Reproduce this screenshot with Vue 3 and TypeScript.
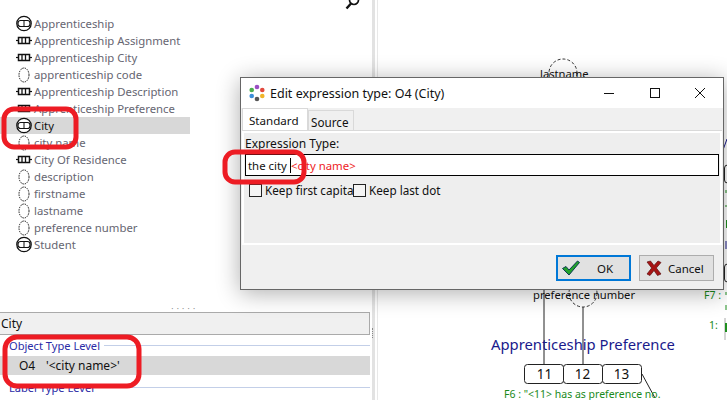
<script setup lang="ts">
interface Row { name: string; kind: 'entity' | 'fact' | 'value'; selected?: boolean }
const rows: Row[] = [
  { name: 'Apprenticeship', kind: 'entity' },
  { name: 'Apprenticeship Assignment', kind: 'fact' },
  { name: 'Apprenticeship City', kind: 'fact' },
  { name: 'apprenticeship code', kind: 'value' },
  { name: 'Apprenticeship Description', kind: 'fact' },
  { name: 'Apprenticeship Preference', kind: 'fact' },
  { name: 'City', kind: 'entity', selected: true },
  { name: 'city name', kind: 'value' },
  { name: 'City Of Residence', kind: 'fact' },
  { name: 'description', kind: 'value' },
  { name: 'firstname', kind: 'value' },
  { name: 'lastname', kind: 'value' },
  { name: 'preference number', kind: 'value' },
  { name: 'Student', kind: 'entity' },
]
</script>

<template>
  <div class="app">
    <div class="left">
      <div class="filter">
        <span class="filter-label">Filter Text</span>
        <svg class="search" width="16" height="10" viewBox="0 0 16 10">
          <circle cx="10" cy="0" r="4.5" fill="none" stroke="#111" stroke-width="1.7" />
          <path d="M7 3.5 L2.5 8.5" stroke="#111" stroke-width="2.4" />
        </svg>
      </div>
      <ul class="tree">
        <li v-for="r in rows" :key="r.name" class="row" :class="{ selected: r.selected }">
          <svg class="ico" width="18" height="17" viewBox="0 0 18 17">
            <template v-if="r.kind === 'entity'">
              <circle cx="8" cy="8.5" r="7.2" fill="#fff" stroke="#111" stroke-width="1.3" />
              <rect x="2" y="5.5" width="12" height="6" rx="2.5" fill="#fff" stroke="#111" stroke-width="1.2" />
              <path d="M8 5.5 V11.5" stroke="#111" stroke-width="1" />
            </template>
            <template v-else-if="r.kind === 'fact'">
              <path d="M0 8.5 H16" stroke="#111" stroke-width="1.2" />
              <rect x="2.5" y="5.5" width="11" height="6" fill="#fff" stroke="#111" stroke-width="1.5" />
              <path d="M6 6 V11 M9.5 6 V11" stroke="#111" stroke-width="1.3" />
            </template>
            <ellipse v-else cx="8" cy="9" rx="5" ry="7" fill="#fff" stroke="#111" stroke-width="1" stroke-dasharray="1.4 1" />
          </svg>
          <span class="row-name">{{ r.name }}</span>
        </li>
      </ul>
      <div class="grip">· · · · ·</div>
      <div class="head">City</div>
      <div class="level"><span>Object Type Level</span><i></i></div>
      <div class="reading"><span class="rid">O4</span><span>'&lt;city name&gt;'</span></div>
      <div class="level second"><span>Label Type Level</span><i></i></div>
    </div>
    <div class="splitter"><i class="vgrip"></i></div>
    <div class="canvas"></div>

    <svg class="diagram" width="727" height="400" viewBox="0 0 727 400">
      <circle cx="563" cy="73" r="14" fill="none" stroke="#333" stroke-dasharray="3 2" />
      <circle cx="583" cy="293" r="14" fill="none" stroke="#333" stroke-dasharray="3 2" />
      <path d="M544 290 V365 M583 307 V365 M642 374 L655 398" stroke="#222" fill="none" />
      <rect x="524.5" y="364.5" width="39" height="19" rx="3" fill="#fff" stroke="#222" />
      <rect x="563.5" y="364.5" width="39" height="19" rx="3" fill="#fff" stroke="#222" />
      <rect x="602.5" y="364.5" width="39" height="19" rx="3" fill="#fff" stroke="#222" />
      <path d="M723 150 L727 139" stroke="#1a1a8c" />
      <rect x="724.5" y="165" width="8" height="18" rx="3" fill="#fff" stroke="#222" />
      <rect x="724.5" y="264" width="8" height="18" rx="3" fill="#fff" stroke="#222" />
      <path d="M725 318 V340" stroke="#aaa" />
      <path d="M726 190 V193 M726 205 V207 M726.5 220 V228 M726 292 V295 M726 305 V310" stroke="#1f8f1f" />
      <path d="M726 323 V332" stroke="#1f8f1f" stroke-width="2" />
      <path d="M726 241 V249" stroke="#1a1a8c" />
    </svg>
    <span class="d-text lastname">lastname</span>
    <span class="d-text prefnum">preference number</span>
    <span class="d-title">Apprenticeship Preference</span>
    <span class="d-num n11">11</span>
    <span class="d-num n12">12</span>
    <span class="d-num n13">13</span>
    <span class="d-green f6">F6 : "&lt;11&gt; has as preference no.</span>
    <span class="d-green f7">F7 :</span>
    <span class="d-green one">1:</span>

    <section class="dialog">
      <header class="titlebar">
        <svg class="logo" width="18" height="18" viewBox="0 0 18 18">
          <circle cx="9" cy="3" r="2.3" fill="#9a4fc4" />
          <circle cx="14.3" cy="6" r="2.3" fill="#e2483d" />
          <circle cx="14.3" cy="12" r="2.3" fill="#f0b429" />
          <circle cx="9" cy="15" r="2.3" fill="#555" />
          <circle cx="3.7" cy="12" r="2.3" fill="#3c8fd8" />
          <circle cx="3.7" cy="6" r="2.3" fill="#4cae4f" />
        </svg>
        <span class="title">Edit expression type: O4 (City)</span>
        <div class="winbtns">
          <svg width="12" height="12" viewBox="0 0 12 12"><path d="M1 6.5 H11" stroke="#111" /></svg>
          <svg width="12" height="12" viewBox="0 0 12 12"><rect x="1.5" y="1.5" width="9" height="9" fill="none" stroke="#111" /></svg>
          <svg width="12" height="12" viewBox="0 0 12 12"><path d="M1 1 L11 11 M11 1 L1 11" stroke="#111" /></svg>
        </div>
      </header>
      <div class="tabs">
        <div class="tab active">Standard</div>
        <div class="tab">Source</div>
      </div>
      <div class="panel">
        <label class="expr-label">Expression Type:</label>
        <div class="input"><span class="typed">the city</span><span class="caret"></span><span class="red">&lt;city name&gt;</span></div>
        <div class="checks">
          <span class="box"></span><span class="check-first">Keep first capita</span>
          <span class="box"></span><span>Keep last dot</span>
        </div>
      </div>
      <div class="buttons">
        <button class="btn primary">
          <svg width="20" height="18" viewBox="0 0 20 18"><path d="M1.5 9.5 L5 7.5 L8 11 L16.5 2 L18.5 3.5 L8 16 Z" fill="#22a22a" stroke="#0d3b52" stroke-width="1" /></svg>
          <span>OK</span>
        </button>
        <button class="btn">
          <svg width="16" height="16" viewBox="0 0 16 16"><path d="M1 2 L4.5 1 L8 5.5 L12 1 L15 2.5 L10.3 8 L15 14 L11.5 15.5 L8 10.5 L4 15.5 L1 14 L5.7 8 Z" fill="#a81414" stroke="#5a1010" stroke-width=".7" /></svg>
          <span>Cancel</span>
        </button>
      </div>
    </section>

    <svg class="marks" width="727" height="400" viewBox="0 0 727 400">
      <rect x="4" y="109" width="72" height="38" rx="10" />
      <rect x="225" y="152" width="79" height="30" rx="10" />
      <rect x="5" y="337" width="134" height="49" rx="12" />
    </svg>
  </div>
</template>

<style>
html, body { margin: 0; background: #fff; }
</style>

<style scoped>
.app {
  position: relative;
  width: 727px;
  height: 400px;
  overflow: hidden;
  display: flex;
  background: #fff;
  font-family: "Noto Sans", "Open Sans", sans-serif;
  font-size: 12px;
  color: #111;
}
.left { width: 372px; height: 400px; display: flex; flex-direction: column; flex: none; }
.filter { height: 15px; display: flex; justify-content: space-between; overflow: hidden; padding: 0 12px 0 9px; }
.filter-label { margin-top: -14px; line-height: 17px; color: #555; font-size: 11.4px; }
.tree { list-style: none; margin: 0; padding: 0; flex: 1; }
.row { height: 17px; width: 190px; display: flex; align-items: center; padding-left: 16px; box-sizing: border-box; color: #666672; line-height: 17px; font-size: 11.35px; }
.row.selected { background: #d8d8d8; color: #111; }
.ico { flex: none; }
.row-name { white-space: nowrap; }
.grip { height: 12px; padding-top: 6px; box-sizing: border-box; line-height: 6px; text-align: center; font-size: 8px; color: #888; width: 367px; letter-spacing: .6px; }
.head { height: 23px; width: 370px; box-sizing: border-box; background: #f0f0f0; border: 1px solid #aaa; border-left: none; line-height: 21px; padding-left: 1px; }
.level { display: flex; align-items: center; gap: 4px; height: 21px; width: 370px; color: #2b2ba6; padding-left: 9px; box-sizing: border-box; font-size: 11.1px; }
.level i { flex: 1; height: 1px; background: #c3cfe8; }
.reading { height: 19px; width: 370px; background: #d8d8d8; display: flex; align-items: center; line-height: 19px; }
.rid { margin-left: 19px; width: 27px; }
.level.second { height: 25px; }
.splitter { width: 6px; flex: none; box-sizing: border-box; border-left: 3px solid #e2e2e2; border-right: 1px solid #e8e8e8; }
.vgrip { display: block; width: 0; height: 10px; margin: 328px 0 0 -3px; border-left: 1px dotted #888; }
.canvas { flex: 1; }
.diagram, .marks { position: absolute; left: 0; top: 0; pointer-events: none; }
.d-text, .d-title, .d-num, .d-green { position: absolute; white-space: nowrap; }
.d-text { font-size: 11.2px; }
.lastname { left: 540px; top: 66px; }
.prefnum { left: 533px; top: 287px; }
.d-title { left: 491px; top: 333px; font-size: 14.8px; line-height: 22px; color: #1a1a8c; }
.d-num { top: 365px; font-size: 13.5px; line-height: 19px; width: 39px; text-align: center; }
.n11 { left: 525px; }
.n12 { left: 563px; }
.n13 { left: 602px; }
.d-green { color: #1a8a1a; font-size: 10.5px; }
.f6 { left: 504px; top: 387px; }
.f7 { left: 704px; top: 288px; }
.one { left: 709px; top: 318px; }

.dialog {
  position: absolute;
  left: 240px;
  top: 77px;
  width: 484px;
  height: 213px;
  box-sizing: border-box;
  background: #f0f0f0;
  border: 1px solid #666;
  box-shadow: 0 3px 22px rgba(0, 0, 0, .32);
  display: flex;
  flex-direction: column;
}
.titlebar { height: 30px; flex: none; background: #fff; display: flex; align-items: center; padding-left: 7px; }
.logo { flex: none; }
.title { margin-left: 4px; font-size: 12.5px; flex: 1; }
.winbtns { display: flex; gap: 33.5px; padding-right: 17px; }
.tabs { display: flex; height: 23px; flex: none; align-items: flex-end; padding-left: 1px; }
.tab { height: 21px; line-height: 22px; padding: 0 2px; background: #f0f0f0; border: 1px solid #d9d9d9; border-bottom: none; box-sizing: border-box; width: 46px; font-size: 11.7px; }
.tab.active { height: 23px; width: 66px; background: #fff; padding-left: 6px; border-right: 1px solid #d9d9d9; font-size: 11.6px; line-height: 23px; }
.panel { height: 114px; flex: none; margin: 0 1px; padding-left: 1px; background: #eeeeee; border: 2px solid #fff; border-top-color: #fff; outline: 0; box-shadow: 0 -1px 0 #d9d9d9; box-sizing: border-box; }
.expr-label { display: block; height: 21px; line-height: 21px; }
.input { height: 22px; width: 474px; box-sizing: border-box; background: #fff; border: 1px solid #000; display: flex; align-items: center; padding-left: 2px; line-height: 21px; font-size: 11.4px; }
.typed { margin-right: 3px; }
.caret { width: 1px; height: 15px; background: #000; flex: none; }
.red { color: #ee1c25; }
.checks { display: flex; align-items: center; height: 14px; margin-top: 7px; padding-left: 4px; font-size: 11.7px; }
.box { width: 13px; height: 13px; box-sizing: border-box; border: 1px solid #222; background: #f4f4f4; flex: none; margin-right: 3px; }
.check-first { width: 88px; white-space: nowrap; }
.buttons { display: flex; justify-content: flex-end; gap: 8px; padding: 10px 9px 0 0; }
.btn { width: 75px; height: 26px; box-sizing: border-box; background: #e1e1e1; border: 1px solid #adadad; display: flex; align-items: center; padding: 0 0 0 6px; font: inherit; font-size: 11.5px; color: #111; gap: 6px; }
.btn.primary { border: 2px solid #0078d7; gap: 16px; padding-left: 3px; }
.marks rect { fill: none; stroke: #ed1c24; stroke-width: 5px; }
</style>
